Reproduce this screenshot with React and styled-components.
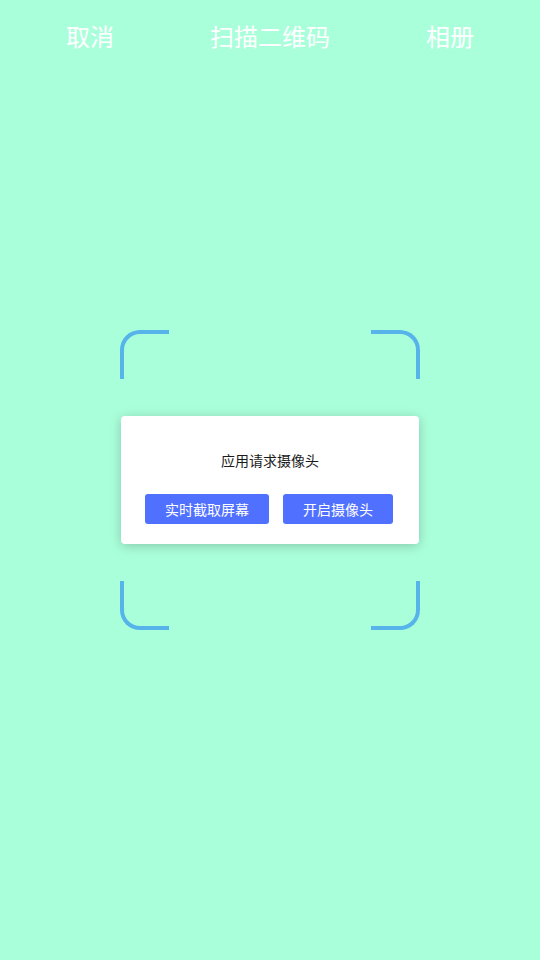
import React from "react";
import styled, { createGlobalStyle } from "styled-components";

const GlobalStyle = createGlobalStyle`
  html, body {
    margin: 0;
    padding: 0;
    background: #aaffdb;
    font-family: "Noto Sans CJK SC", "Noto Sans", sans-serif;
  }
`;

const Page = styled.div`
  width: 540px;
  height: 960px;
  display: flex;
  flex-direction: column;
  background: #aaffdb;
`;

const Header = styled.header`
  display: grid;
  grid-template-columns: repeat(3, 1fr);
  height: 76px;
  padding-bottom: 4px;
  box-sizing: border-box;
  align-items: center;
`;

const HeaderItem = styled.div`
  text-align: center;
  color: #ffffff;
  font-size: 24px;
  line-height: 1;
`;

const Main = styled.main`
  flex: 1;
  display: flex;
  align-items: center;
  justify-content: center;
  padding-bottom: 76px;
`;

const Frame = styled.div`
  position: relative;
  width: 300px;
  height: 300px;
  display: flex;
  flex-direction: column;
  justify-content: space-between;
`;

const CornerRow = styled.div`
  display: flex;
  justify-content: space-between;
`;

const Corner = styled.div`
  width: 49px;
  height: 49px;
  box-sizing: border-box;
  border: 0 solid #56b4ea;
  border-top-width: ${(p) => (p.top ? "4px" : "0")};
  border-bottom-width: ${(p) => (p.top ? "0" : "4px")};
  border-left-width: ${(p) => (p.left ? "4px" : "0")};
  border-right-width: ${(p) => (p.left ? "0" : "4px")};
  border-top-left-radius: ${(p) => (p.top && p.left ? "20px" : "0")};
  border-top-right-radius: ${(p) => (p.top && !p.left ? "20px" : "0")};
  border-bottom-left-radius: ${(p) => (!p.top && p.left ? "20px" : "0")};
  border-bottom-right-radius: ${(p) => (!p.top && !p.left ? "20px" : "0")};
`;

const Dialog = styled.div`
  position: absolute;
  left: 1px;
  right: 1px;
  top: 86px;
  height: 128px;
  box-sizing: border-box;
  background: #ffffff;
  border-radius: 4px;
  box-shadow: 0 2px 12px rgba(0, 0, 0, 0.22);
  display: flex;
  flex-direction: column;
  align-items: center;
  padding: 34px 2px 0 0;
`;

const Title = styled.div`
  font-size: 14px;
  line-height: 20px;
  color: #1a1a1a;
  padding-left: 2px;
`;

const Actions = styled.div`
  display: flex;
  gap: 14px;
  margin-top: 24px;
`;

const Button = styled.button`
  height: 30px;
  padding: 0 20px;
  border: none;
  border-radius: 3px;
  background: #5070ff;
  color: #ffffff;
  font-family: inherit;
  font-size: 14px;
  line-height: 30px;
`;

export default function App() {
  return (
    <>
      <GlobalStyle />
      <Page>
        <Header>
          <HeaderItem>取消</HeaderItem>
          <HeaderItem>扫描二维码</HeaderItem>
          <HeaderItem>相册</HeaderItem>
        </Header>
        <Main>
          <Frame>
            <CornerRow>
              <Corner top left />
              <Corner top />
            </CornerRow>
            <CornerRow>
              <Corner left />
              <Corner />
            </CornerRow>
            <Dialog>
              <Title>应用请求摄像头</Title>
              <Actions>
                <Button>实时截取屏幕</Button>
                <Button>开启摄像头</Button>
              </Actions>
            </Dialog>
          </Frame>
        </Main>
      </Page>
    </>
  );
}
